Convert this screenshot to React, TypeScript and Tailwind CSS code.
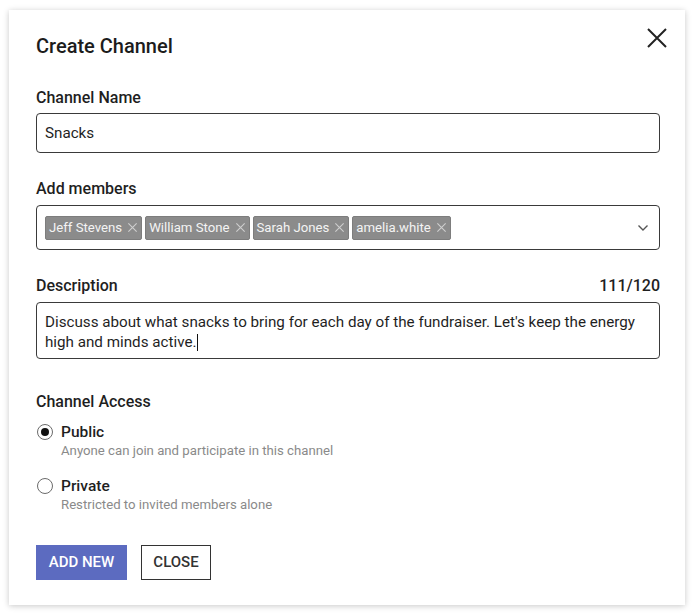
import React from "react";

const members = ["Jeff Stevens", "William Stone", "Sarah Jones", "amelia.white"];

const Chip: React.FC<{ label: string }> = ({ label }) => (
  <div className="flex h-[24px] items-center rounded-[2px] border border-[#7d7d7d] bg-[#8b8b8b] pl-[3px] pr-[3px]">
    <span className="text-[13.2px] leading-[20px] text-[#f4f4f4]">{label}</span>
    <svg className="ml-[5px]" width="11" height="11" viewBox="0 0 12 12" fill="none">
      <path d="M1.5 1.5l9 9M10.5 1.5l-9 9" stroke="#cfcfcf" strokeWidth="1.2" />
    </svg>
  </div>
);

const RadioOption: React.FC<{ checked?: boolean; title: string; hint: string }> = ({
  checked,
  title,
  hint,
}) => (
  <div className="flex">
    <div className="mt-[2px] flex h-[16px] w-[16px] items-center justify-center rounded-full border border-[#6b6b6b] bg-white">
      {checked && <div className="h-[8px] w-[8px] rounded-full bg-[#111]" />}
    </div>
    <div className="ml-[8px]">
      <div className="text-[15.5px] font-medium leading-[20px] text-[#1f1f1f]">{title}</div>
      <div className="text-[13.2px] leading-[18px] text-[#8a8a8a]">{hint}</div>
    </div>
  </div>
);

export default function App() {
  return (
    <div className="min-h-[615px] bg-white pl-[9px] pt-[10px]" style={{ fontFamily: "Roboto, 'Noto Sans', sans-serif" }}>
      <div className="relative h-[595px] w-[676px] bg-white pl-[27px] pr-[25px] pt-[22px] shadow-[0_1px_6px_rgba(0,0,0,0.22)]">
        <button type="button" className="absolute right-[17px] top-[17px]">
          <svg width="22" height="22" viewBox="0 0 22 22" fill="none">
            <path d="M2 2l18 18M20 2L2 20" stroke="#222" strokeWidth="2" />
          </svg>
        </button>

        <h1 className="text-[20px] font-medium leading-[28px] text-[#1c1c1c]">Create Channel</h1>

        <div className="mt-[28px] text-[16px] font-medium leading-[20px] text-[#1f1f1f]">Channel Name</div>
        <div className="mt-[5px] flex h-[40px] items-center rounded-[4px] border border-[#3a3a3a] px-[8px] text-[15.2px] text-[#1f1f1f]">
          Snacks
        </div>

        <div className="mt-[26px] text-[16px] font-medium leading-[20px] text-[#1f1f1f]">Add members</div>
        <div className="mt-[6px] flex h-[45px] items-center rounded-[4px] border border-[#3a3a3a] pl-[8px] pr-[10px]">
          <div className="flex flex-1 gap-[3px]">
            {members.map((m) => (
              <Chip key={m} label={m} />
            ))}
          </div>
          <svg width="12" height="8" viewBox="0 0 12 8" fill="none">
            <path d="M1.5 1.5L6 6l4.5-4.5" stroke="#555" strokeWidth="1.4" />
          </svg>
        </div>

        <div className="mt-[26px] flex items-center justify-between text-[16px] font-medium leading-[20px] text-[#1f1f1f]">
          <span>Description</span>
          <span>111/120</span>
        </div>
        <div className="mt-[6px] h-[57px] rounded-[4px] border border-[#3a3a3a] px-[8px] pt-[9px] text-[15.2px] leading-[20px] text-[#1f1f1f]">
          Discuss about what snacks to bring for each day of the fundraiser. Let's keep the energy high and minds active.
          <span className="ml-[1px] inline-block h-[17px] w-[1px] align-[-4px] bg-[#111]" />
        </div>

        <div className="mt-[33px] text-[16px] font-medium leading-[20px] text-[#1f1f1f]">Channel Access</div>
        <div className="mt-[10px] flex flex-col gap-[16px] pl-[1px]">
          <RadioOption checked title="Public" hint="Anyone can join and participate in this channel" />
          <RadioOption title="Private" hint="Restricted to invited members alone" />
        </div>

        <div className="mt-[31px] flex gap-[14px]">
          <button
            type="button"
            className="h-[35px] w-[91px] bg-[#5c6bc0] text-[15px] font-medium uppercase text-white"
          >
            Add New
          </button>
          <button
            type="button"
            className="h-[35px] w-[70px] border border-[#333] bg-white text-[15px] font-medium uppercase text-[#333]"
          >
            Close
          </button>
        </div>
      </div>
    </div>
  );
}
